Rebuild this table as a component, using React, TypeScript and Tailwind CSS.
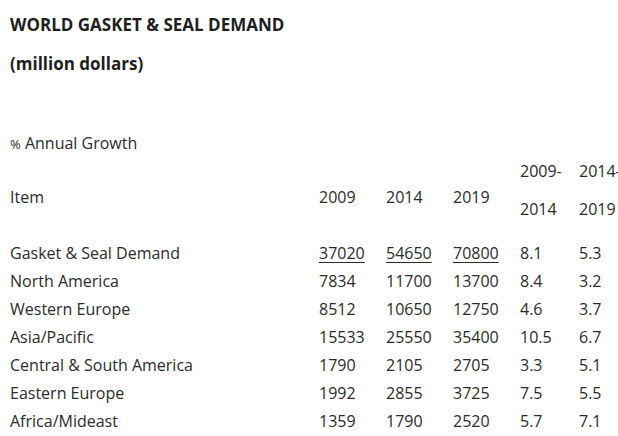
import React from "react";

const rows: [string, string, string, string, string, string][] = [
  ["North America", "7834", "11700", "13700", "8.4", "3.2"],
  ["Western Europe", "8512", "10650", "12750", "4.6", "3.7"],
  ["Asia/Pacific", "15533", "25550", "35400", "10.5", "6.7"],
  ["Central & South America", "1790", "2105", "2705", "3.3", "5.1"],
  ["Eastern Europe", "1992", "2855", "3725", "7.5", "5.5"],
  ["Africa/Mideast", "1359", "1790", "2520", "5.7", "7.1"],
];

function Row({ cells, underline }: { cells: string[]; underline?: boolean }) {
  return (
    <div className="flex h-[28px] items-center whitespace-nowrap leading-[28px]">
      <div className="w-[309px] shrink-0">{cells[0]}</div>
      <div className={"w-[67px] shrink-0 " + (underline ? "underline underline-offset-[3px]" : "")}>{cells[1]}</div>
      <div className={"w-[67px] shrink-0 " + (underline ? "underline underline-offset-[3px]" : "")}>{cells[2]}</div>
      <div className={"w-[67px] shrink-0 " + (underline ? "underline underline-offset-[3px]" : "")}>{cells[3]}</div>
      <div className="w-[59px] shrink-0">{cells[4]}</div>
      <div className="w-[59px] shrink-0">{cells[5]}</div>
    </div>
  );
}

export default function App() {
  return (
    <div className="h-[436px] w-[618px] overflow-hidden bg-white">
      <div
        className="px-[10px] pt-[14px] text-[16px] leading-[22px] text-[#2b2b2b]"
        style={{ fontFamily: '"Open Sans", sans-serif' }}
      >
        <h1 className="text-[17px] font-bold text-[#1e1e1e]">WORLD GASKET &amp; SEAL DEMAND</h1>
        <p className="mt-[17px] text-[17px] font-bold text-[#1e1e1e]">(million dollars)</p>
        <p className="mt-[57px]">
          <span className="text-[13px]">%</span> Annual Growth
        </p>
        <div className="mt-[5px] flex items-start whitespace-nowrap">
          <div className="w-[309px] shrink-0 pt-[26px]">Item</div>
          <div className="w-[67px] shrink-0 pt-[26px]">2009</div>
          <div className="w-[67px] shrink-0 pt-[26px]">2014</div>
          <div className="w-[67px] shrink-0 pt-[26px]">2019</div>
          <div className="w-[59px] shrink-0">
            <div>2009-</div>
            <div className="mt-[16px]">2014</div>
          </div>
          <div className="w-[59px] shrink-0">
            <div>2014-</div>
            <div className="mt-[16px]">2019</div>
          </div>
        </div>
        <div className="mt-[19px]">
          <Row cells={["Gasket & Seal Demand", "37020", "54650", "70800", "8.1", "5.3"]} underline />
          {rows.map((r) => (
            <Row key={r[0]} cells={r} />
          ))}
        </div>
      </div>
    </div>
  );
}
